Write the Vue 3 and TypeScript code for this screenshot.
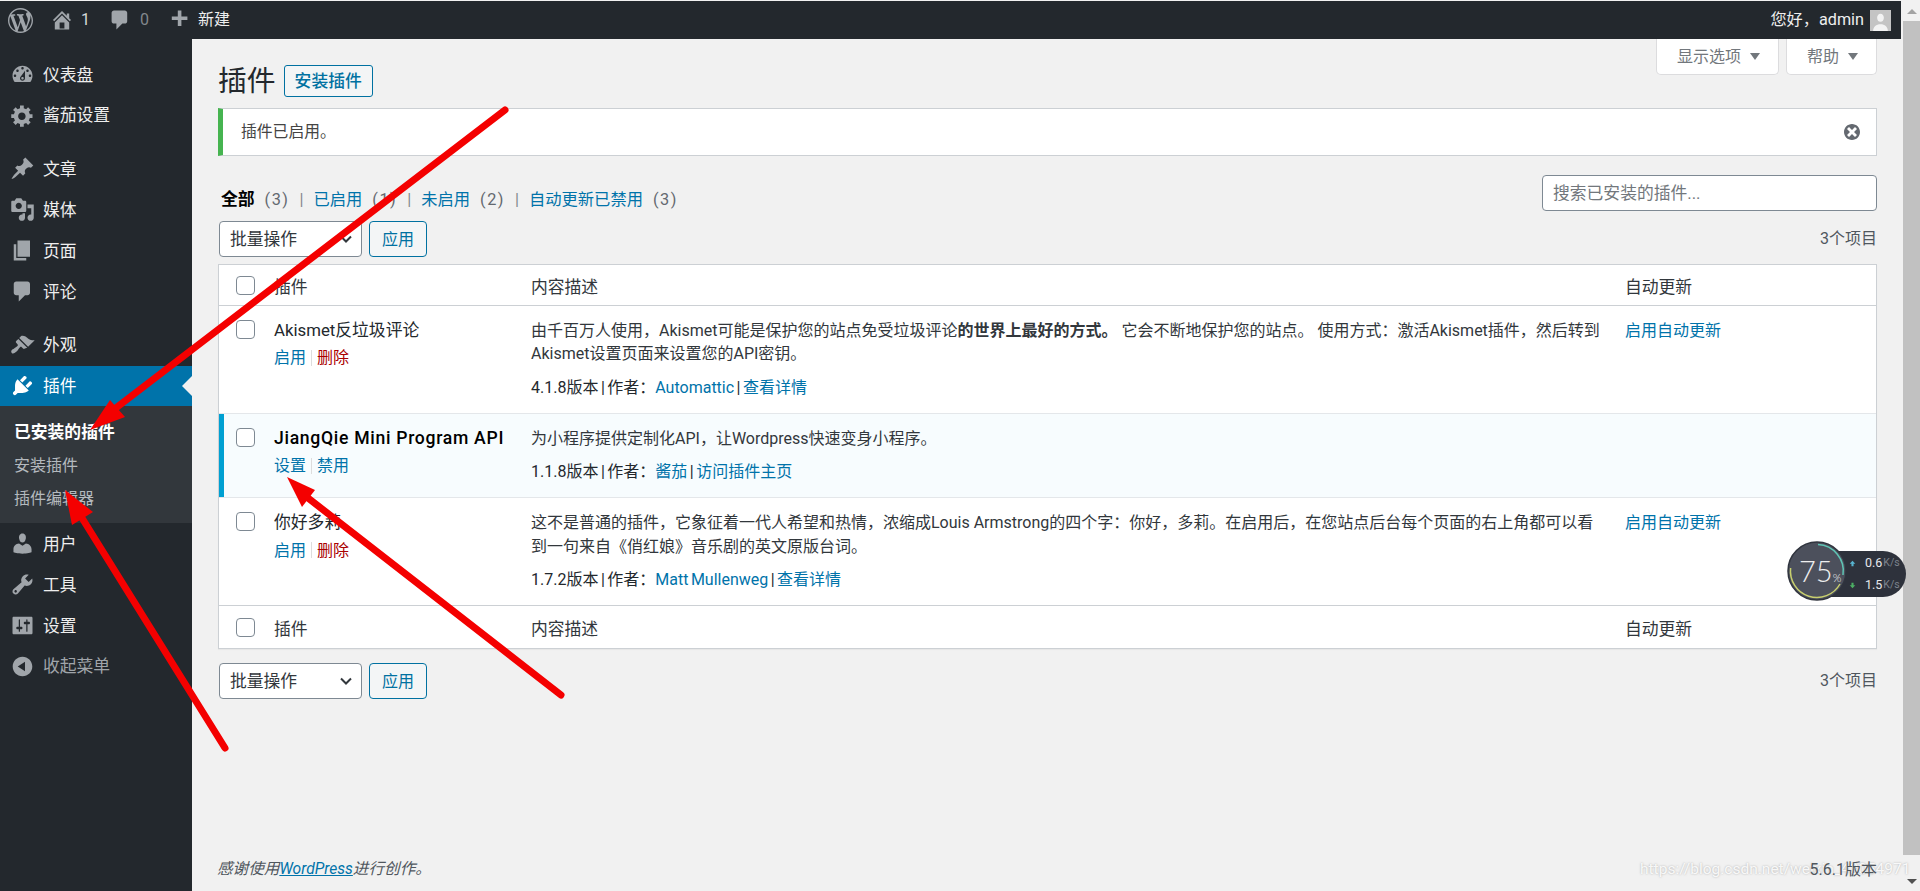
<script setup lang="ts">
interface MenuItem { label: string; icon: string; gapBefore?: boolean; active?: boolean; dim?: boolean; vb?: string }
const P = {
  dashboard: 'M3.76 16h12.48c1.1-1.37 1.76-3.11 1.76-5 0-4.42-3.58-8-8-8s-8 3.58-8 8c0 1.89.66 3.63 1.76 5zM10 4c.55 0 1 .45 1 1s-.45 1-1 1-1-.45-1-1 .45-1 1-1zM6 6c.55 0 1 .45 1 1s-.45 1-1 1-1-.45-1-1 .45-1 1-1zm8 0c.55 0 1 .45 1 1s-.45 1-1 1-1-.45-1-1 .45-1 1-1zm-5.37 5.55L12 7v6c0 1.1-.9 2-2 2s-2-.9-2-2c0-.57.24-1.08.63-1.45zM4 10c.55 0 1 .45 1 1s-.45 1-1 1-1-.45-1-1 .45-1 1-1zm12 0c.55 0 1 .45 1 1s-.45 1-1 1-1-.45-1-1 .45-1 1-1zm-5 3c0-.55-.45-1-1-1s-1 .45-1 1 .45 1 1 1 1-.45 1-1z',
  gear: 'M18 12h-2.18c-.17.7-.44 1.35-.81 1.93l1.54 1.54-2.1 2.1-1.54-1.54c-.58.36-1.23.63-1.91.79V19H8v-2.18c-.68-.16-1.33-.43-1.91-.79l-1.54 1.54-2.12-2.12 1.54-1.54c-.36-.58-.63-1.23-.79-1.91H1V9.03h2.17c.16-.7.44-1.35.8-1.94L2.43 5.55l2.1-2.1 1.54 1.54c.58-.37 1.24-.64 1.93-.81V2h3v2.18c.68.16 1.33.43 1.91.79l1.54-1.54 2.12 2.12-1.54 1.54c.36.59.64 1.24.8 1.94H18V12zm-8.5 1.5c1.66 0 3-1.34 3-3s-1.34-3-3-3-3 1.34-3 3 1.34 3 3 3z',
  pin: 'M10.44 3.02l1.82-1.82 6.36 6.35-1.83 1.82c-1.05-.68-2.48-.57-3.41.36l-.75.75c-.92.93-1.04 2.35-.35 3.41l-1.83 1.82-2.41-2.41-2.8 2.79c-.42.42-3.38 2.71-3.8 2.29s1.86-3.39 2.28-3.81l2.79-2.79L4.1 9.36l1.83-1.82c1.05.69 2.48.57 3.4-.36l.75-.75c.93-.92 1.05-2.35.36-3.41z',
  media: 'M13 11V4c0-.55-.45-1-1-1h-1.67L9 1H5L3.67 3H2c-.55 0-1 .45-1 1v7c0 .55.45 1 1 1h10c.55 0 1-.45 1-1zM7 4.5c1.38 0 2.5 1.12 2.5 2.5S8.38 9.5 7 9.5 4.5 8.38 4.5 7 5.62 4.5 7 4.5zM14 6h5v10.5c0 1.38-1.12 2.5-2.5 2.5S14 17.88 14 16.5s1.12-2.5 2.5-2.5c.17 0 .34.02.5.05V9h-3V6zm-4 8.05V13h2v3.5c0 1.38-1.12 2.5-2.5 2.5S7 17.88 7 16.5 8.12 14 9.5 14c.17 0 .34.02.5.05z',
  page: 'M6 15V2h10v13H6zm-1 1h8v2H3V5h2v11z',
  comment: 'M5 2h9c1.1 0 2 .9 2 2v7c0 1.1-.9 2-2 2h-2l-5 5v-5H5c-1.1 0-2-.9-2-2V4c0-1.1.9-2 2-2z',
  brush: 'M14.48 11.06L7.41 3.99l1.5-1.5c.5-.56 2.3-.47 3.51.32 1.21.8 1.43 1.28 2.91 2.1 1.18.64 2.45 1.26 4.45.85zm-.71.71L6.7 4.7 4.93 6.47c-.39.39-.39 1.02 0 1.41l1.06 1.06c.39.39.39 1.03 0 1.42-.6.6-1.43 1.11-2.21 1.69-.35.26-.7.53-1.01.84C1.43 13.23.4 14.95 1.4 15.95c1 1 2.72-.03 4.07-1.37.31-.31.58-.66.84-1.01.58-.78 1.09-1.61 1.69-2.21.39-.39 1.02-.39 1.41 0l1.06 1.06c.39.39 1.02.39 1.41 0z',
  plugin: 'M13.11 4.36L9.87 7.6 8 5.73l3.24-3.24c.35-.34 1.05-.2 1.56.32.52.51.66 1.21.31 1.55zm-8 1.77l.91-1.12 9.01 9.01-1.19.84c-.71.71-2.63 1.16-3.82 1.16H6.14L4.9 17.26c-.59.59-1.54.59-2.12 0-.59-.58-.59-1.53 0-2.12l1.24-1.24v-3.88c0-1.13.4-3.19 1.09-3.89zm7.26 3.97l3.24-3.24c.34-.35 1.04-.21 1.55.31.52.51.66 1.21.31 1.55l-3.24 3.25z',
  users: 'M10 9.25c-2.27 0-2.73-3.44-2.73-3.44C7 4.02 7.82 2 9.97 2c2.16 0 2.98 2.02 2.71 3.81 0 0-.41 3.44-2.68 3.44zm0 2.57L12.72 10c2.39 0 4.52 2.33 4.52 4.53v2.49s-3.65 1.13-7.24 1.13c-3.65 0-7.24-1.13-7.24-1.13v-2.49c0-2.25 1.94-4.48 4.47-4.48z',
  tools: 'M16.68 9.77c-1.34 1.34-3.3 1.67-4.95.99l-5.41 6.52c-.99.99-2.59.99-3.58 0s-.99-2.59 0-3.57l6.52-5.42c-.68-1.65-.35-3.61.99-4.95 1.28-1.28 3.12-1.62 4.72-1.06l-2.89 2.89 2.82 2.82 2.86-2.87c.53 1.58.18 3.39-1.08 4.65zM3.81 16.21c.4.39 1.04.39 1.43 0 .4-.4.4-1.04 0-1.43-.39-.4-1.03-.4-1.43 0-.39.39-.39 1.03 0 1.43z',
  settings: 'M18 16V4c0-.55-.45-1-1-1H3c-.55 0-1 .45-1 1v12c0 .55.45 1 1 1h14c.55 0 1-.45 1-1zM8 11h1c.55 0 1 .45 1 1s-.45 1-1 1H8v1.5c0 .28-.22.5-.5.5s-.5-.22-.5-.5V13H6c-.55 0-1-.45-1-1s.45-1 1-1h1V5.5c0-.28.22-.5.5-.5s.5.22.5.5V11zm5-2h-1c-.55 0-1-.45-1-1s.45-1 1-1h1V5.5c0-.28.22-.5.5-.5s.5.22.5.5V7h1c.55 0 1 .45 1 1s-.45 1-1 1h-1v5.5c0 .28-.22.5-.5.5s-.5-.22-.5-.5V9z',
  collapse: 'M10 2.16c4.33 0 7.84 3.51 7.84 7.84s-3.51 7.84-7.84 7.84S2.16 14.33 2.16 10 5.71 2.16 10 2.16zm2 11.72V6.12L6.18 9.97z',
  home: 'M16 8.5l1.53 1.53-1.06 1.06L10 4.62l-6.47 6.47-1.06-1.06L10 2.5l4 4v-2h2v4zm-6-2.46l6 5.99V18H4v-5.97zM12 17v-5H8v5h4z',
  plus: 'M17 7v3h-5v5H9v-5H4V7h5V2h3v5h5z',
  dismiss: 'M10 2c4.42 0 8 3.58 8 8s-3.58 8-8 8-8-3.58-8-8 3.58-8 8-8zm5 11l-3-3 3-3-2-2-3 3-3-3-2 2 3 3-3 3 2 2 3-3 3 3z',
  wp: 'M20 10c0-5.51-4.49-10-10-10C4.48 0 0 4.49 0 10c0 5.52 4.48 10 10 10 5.51 0 10-4.48 10-10zM7.78 15.37L4.37 6.22c.55-.02 1.17-.08 1.17-.08.5-.06.44-1.13-.06-1.11 0 0-1.45.11-2.37.11-.18 0-.37 0-.58-.01C4.12 2.69 6.87 1.11 10 1.11c2.33 0 4.45.87 6.05 2.34-.68-.11-1.65.39-1.65 1.58 0 .74.45 1.36.9 2.1.35.61.55 1.36.55 2.46 0 1.49-1.4 5-1.4 5l-3.03-8.37c.54-.02.82-.17.82-.17.5-.05.44-1.25-.06-1.22 0 0-1.44.12-2.38.12-.87 0-2.33-.12-2.33-.12-.5-.03-.56 1.2-.06 1.22l.92.08 1.26 3.41zM17.41 10c.24-.64.74-1.87.43-4.25.7 1.29 1.05 2.71 1.05 4.25 0 3.29-1.73 6.24-4.4 7.78.97-2.59 1.94-5.2 2.92-7.78zM6.1 18.09C3.12 16.65 1.11 13.53 1.11 10c0-1.3.23-2.48.72-3.59C3.25 10.3 4.67 14.2 6.1 18.09zm4.03-6.63l2.58 6.98c-.86.29-1.76.45-2.71.45-.79 0-1.57-.11-2.29-.33.81-2.38 1.62-4.71 2.42-7.1z',
}
const topMenu: MenuItem[] = [
  { label: '仪表盘', icon: P.dashboard },
  { label: '酱茄设置', icon: P.gear },
  { label: '文章', icon: P.pin, gapBefore: true },
  { label: '媒体', icon: P.media },
  { label: '页面', icon: P.page },
  { label: '评论', icon: P.comment },
  { label: '外观', icon: P.brush, gapBefore: true },
  { label: '插件', icon: P.plugin, active: true },
]
const bottomMenu: MenuItem[] = [
  { label: '用户', icon: P.users },
  { label: '工具', icon: P.tools },
  { label: '设置', icon: P.settings },
  { label: '收起菜单', icon: P.collapse, dim: true },
]
const subMenu = ['已安装的插件', '安装插件', '插件编辑器']
const filters = [
  { label: '全部', count: 3, current: true },
  { label: '已启用', count: 1 },
  { label: '未启用', count: 2 },
  { label: '自动更新已禁用', count: 3 },
]
const arrows = [
  { x1: 505, y1: 110, x2: 108, y2: 414, head: '90,430 110,400 125,417' },
  { x1: 225, y1: 748, x2: 82, y2: 518, head: '65,490 93,512 72,525' },
  { x1: 561, y1: 695, x2: 308, y2: 498, head: '287,477 315,490 302,507' },
]
</script>

<template>
  <div class="page">
    <div class="wp">
      <header class="adminbar">
        <svg class="wplogo" viewBox="0 0 20 20"><path :d="P.wp" /></svg>
        <span class="ab-item"><svg viewBox="0 0 20 20"><path :d="P.home" /></svg><span>1</span></span>
        <span class="ab-item zero"><svg viewBox="0 0 20 20"><path :d="P.comment" /></svg><span>0</span></span>
        <span class="ab-item new"><svg viewBox="0 0 20 20"><path :d="P.plus" /></svg><span>新建</span></span>
        <span class="howdy">您好，admin</span>
        <span class="avatar">
          <svg viewBox="0 0 20 20"><rect width="20" height="20" fill="#c4c4c4" /><path fill="#f3f3f3" d="M10 3.5c2 0 3.2 1.6 3.2 3.8 0 2-1.2 4-3.2 4s-3.2-2-3.2-4c0-2.2 1.2-3.8 3.2-3.8zM3 20c0-4 3-6.5 7-6.5s7 2.5 7 6.5z" /></svg>
        </span>
      </header>
      <div class="below">
        <nav class="sidebar">
          <template v-for="m in topMenu" :key="m.label">
            <a class="mi" :class="{ gap: m.gapBefore, active: m.active }">
              <svg viewBox="0 0 20 20"><path :d="m.icon" /></svg>
              <span>{{ m.label }}</span>
            </a>
          </template>
          <div class="submenu">
            <a v-for="(s, i) in subMenu" :key="s" :class="{ cur: i === 0 }">{{ s }}</a>
          </div>
          <a v-for="m in bottomMenu" :key="m.label" class="mi" :class="{ dim: m.dim }">
            <svg viewBox="0 0 20 20"><path :d="m.icon" /></svg>
            <span>{{ m.label }}</span>
          </a>
        </nav>
        <main class="main">
          <div class="tabs">
            <span class="tab">显示选项<i class="caret"></i></span>
            <span class="tab help">帮助<i class="caret"></i></span>
          </div>
          <div class="heading">
            <h1>插件</h1>
            <a class="addnew">安装插件</a>
          </div>
          <div class="notice">
            <p>插件已启用。</p>
            <svg viewBox="0 0 20 20"><path :d="P.dismiss" /></svg>
          </div>
          <div class="filterline">
            <ul class="filters">
              <li v-for="(f, i) in filters" :key="f.label">
                <span v-if="i > 0" class="sep">|</span>
                <a :class="{ current: f.current }">{{ f.label }}</a>
                <span class="count">({{ f.count }})</span>
              </li>
            </ul>
            <div class="search">搜索已安装的插件...</div>
          </div>
          <div class="tablenav top">
            <div class="select">批量操作<svg viewBox="0 0 16 16"><path d="M3 5.5l5 5 5-5" /></svg></div>
            <div class="apply">应用</div>
            <span class="num">3个项目</span>
          </div>
          <div class="table">
            <div class="tr head">
              <div class="cb"><i class="box"></i></div>
              <div>插件</div>
              <div>内容描述</div>
              <div>自动更新</div>
            </div>
            <div class="tr row">
              <div class="cb"><i class="box"></i></div>
              <div>
                <div class="name">Akismet反垃圾评论</div>
                <div class="acts"><a>启用</a><i></i><a class="del">删除</a></div>
              </div>
              <div class="desc">
                <p>由千百万人使用，Akismet可能是保护您的站点免受垃圾评论<b>的世界上最好的方式。</b> 它会不断地保护您的站点。 使用方式：激活Akismet插件，然后转到Akismet设置页面来设置您的API密钥。</p>
                <p class="meta">4.1.8版本 | 作者：<a>Automattic</a> | <a>查看详情</a></p>
              </div>
              <div class="auto"><a>启用自动更新</a></div>
            </div>
            <div class="tr row on">
              <div class="cb"><i class="box"></i></div>
              <div>
                <div class="name strong">JiangQie Mini Program API</div>
                <div class="acts"><a>设置</a><i></i><a>禁用</a></div>
              </div>
              <div class="desc">
                <p>为小程序提供定制化API，让Wordpress快速变身小程序。</p>
                <p class="meta">1.1.8版本 | 作者：<a>酱茄</a> | <a>访问插件主页</a></p>
              </div>
              <div class="auto"></div>
            </div>
            <div class="tr row">
              <div class="cb"><i class="box"></i></div>
              <div>
                <div class="name">你好多莉</div>
                <div class="acts"><a>启用</a><i></i><a class="del">删除</a></div>
              </div>
              <div class="desc">
                <p>这不是普通的插件，它象征着一代人希望和热情，浓缩成Louis Armstrong的四个字：你好，多莉。在启用后，在您站点后台每个页面的右上角都可以看到一句来自《俏红娘》音乐剧的英文原版台词。</p>
                <p class="meta">1.7.2版本 | 作者：<a>Matt Mullenweg</a> | <a>查看详情</a></p>
              </div>
              <div class="auto"><a>启用自动更新</a></div>
            </div>
            <div class="tr head foot">
              <div class="cb"><i class="box"></i></div>
              <div>插件</div>
              <div>内容描述</div>
              <div>自动更新</div>
            </div>
          </div>
          <div class="tablenav bottom">
            <div class="select">批量操作<svg viewBox="0 0 16 16"><path d="M3 5.5l5 5 5-5" /></svg></div>
            <div class="apply">应用</div>
            <span class="num">3个项目</span>
          </div>
          <footer class="footer">
            <span class="thanks">感谢使用<a>WordPress</a>进行创作。</span>
            <span class="version">5.6.1版本</span>
          </footer>
        </main>
      </div>
    </div>
    <div class="scrollbar">
      <i class="sb-up"></i>
      <div class="thumb"></div>
      <i class="sb-down"></i>
    </div>

    <div class="watermark">https://blog.csdn.net/weixin_43054971</div>

    <div class="speed">
      <div class="pill">
        <div class="sp"><svg viewBox="0 0 10 10"><path fill="#58b4d0" d="M5 1l4 4.2H6.5V9h-3V5.2H1z" /></svg><b>0.6</b><small>K/s</small></div>
        <div class="sp"><svg viewBox="0 0 10 10"><path fill="#4caf64" d="M5 9L1 4.8h2.5V1h3v3.8H9z" /></svg><b>1.5</b><small>K/s</small></div>
      </div>
      <div class="gauge">
        <svg viewBox="0 0 60 60">
          <circle cx="30" cy="30" r="29" fill="#4c505c" stroke="#30343e" stroke-width="1.5" />
          <path d="M31 3.5A26.5 26.5 0 0 1 56 34" fill="none" stroke="#5fc4b4" stroke-width="1.5" />
          <path d="M53 43A26.5 26.5 0 0 1 3.6 27" fill="none" stroke="#c8cf6e" stroke-width="1.5" />
        </svg>
        <span class="pct">75<small>%</small></span>
      </div>
    </div>

    <svg class="arrows" viewBox="0 0 1920 891">
      <g v-for="(a, i) in arrows" :key="i">
        <line :x1="a.x1" :y1="a.y1" :x2="a.x2" :y2="a.y2" stroke="#f40000" stroke-width="7" stroke-linecap="round" />
        <polygon :points="a.head" fill="#f40000" />
      </g>
    </svg>
  </div>
</template>

<style>
html, body { margin: 0; padding: 0; overflow: hidden; background: #f1f1f1; }
</style>

<style scoped>
.page {
  position: relative;
  display: flex;
  width: 1920px;
  height: 891px;
  overflow: hidden;
  background: #f1f1f1;
  font-family: Roboto, "Noto Sans CJK SC", sans-serif;
  font-size: 16px;
  line-height: 23.4px;
  color: #444;
}
.wp { flex: 1; display: flex; flex-direction: column; min-width: 0; }
.adminbar {
  height: 38px;
  margin-top: 1px;
  margin-right: 2px;
  background: #23282d;
  color: #eee;
  display: flex;
  align-items: center;
  padding: 0 8px;
  flex: none;
  font-size: 16px;
}
.wplogo { width: 25px; height: 25px; fill: #a0a5aa; margin-right: 17px; }
.ab-item { display: flex; align-items: center; color: #d5d7d9; }
.ab-item svg { width: 24px; height: 24px; fill: #a0a5aa; margin-right: 7px; }
.ab-item.zero { margin-left: 18px; color: #82878c; }
.ab-item.zero svg { margin-right: 8px; }
.ab-item.new { margin-left: 18px; color: #eee; }
.ab-item.new svg { margin-right: 7px; }
.howdy { margin-left: auto; margin-right: 6px; font-size: 16.2px; }
.avatar { width: 21px; height: 21px; margin-right: 2px; }
.avatar svg { display: block; width: 21px; height: 21px; }

.below { flex: 1; display: flex; min-height: 0; }
.sidebar {
  width: 192px;
  flex: none;
  background: #23282d;
  padding-top: 15px;
  box-sizing: border-box;
}
.mi {
  position: relative;
  display: flex;
  align-items: center;
  height: 40.8px;
  font-size: 16.8px;
  color: #eee;
  padding-left: 10px;
}
.mi span { padding-top: 2px; }
.mi svg { width: 25px; height: 25px; fill: #a0a5aa; margin-right: 8px; flex: none; }
.mi.gap { margin-top: 13px; }
.mi.dim { color: #a0a5aa; }
.mi.active { background: #0073aa; color: #fff; }
.mi.active svg { fill: #fff; }
.mi.active::after {
  content: "";
  position: absolute;
  right: 0;
  top: 50%;
  margin-top: -10px;
  border: 10px solid transparent;
  border-right-color: #f1f1f1;
  border-left-width: 0;
}
.submenu {
  background: #32373c;
  height: 117px;
  padding-top: 10px;
  box-sizing: border-box;
  display: flex;
  flex-direction: column;
}
.submenu a {
  height: 33px;
  line-height: 33px;
  padding-left: 14px;
  color: #b4b9be;
  font-size: 16px;
}
.submenu a.cur { color: #fff; font-weight: 700; font-size: 16.8px; }

.main { flex: 1; min-width: 0; display: flex; flex-direction: column; padding: 0 26px 0 26px; position: relative; }
.tabs { position: absolute; top: 0; right: 26px; display: flex; gap: 7px; }
.tab {
  height: 35px;
  line-height: 35px;
  padding: 0 18px 0 20px;
  background: #fff;
  border: 1px solid #dcdcde;
  border-top: 0;
  border-radius: 0 0 5px 5px;
  color: #72777c;
  display: flex;
  align-items: center;
}
.caret {
  display: block;
  margin-left: 9px;
  width: 0;
  height: 0;
  border: 5px solid transparent;
  border-top: 7px solid #72777c;
  border-bottom: 0;
}
.heading { display: flex; align-items: center; height: 69px; padding-top: 15px; box-sizing: border-box; gap: 8px; flex: none; }
h1 { margin: 0; font-size: 28.8px; font-weight: 400; line-height: 36px; color: #23282d; }
.addnew {
  height: 30px;
  line-height: 30px;
  padding: 0 10px;
  border: 1px solid #0071a1;
  border-radius: 3px;
  color: #0071a1;
  font-size: 16.8px;
  font-weight: 500;
  background: #f3f5f6;
}
.notice {
  height: 48px;
  box-sizing: border-box;
  background: #fff;
  border: 1px solid #ccd0d4;
  border-left: 5px solid #46b450;
  display: flex;
  align-items: center;
  justify-content: space-between;
  padding: 0 14px 0 18px;
  flex: none;
}
.notice p { margin: 0; font-size: 15.8px; }
.notice svg { width: 20px; height: 20px; fill: #646970; }
.filterline { display: flex; align-items: flex-start; justify-content: space-between; margin-top: 19px; height: 46px; flex: none; }
.filters { list-style: none; display: flex; margin: 13px 0 0 3px; padding: 0; font-size: 16.3px; }
.filters li { display: flex; align-items: center; }
.filters a { color: #0073aa; }
.filters a.current { color: #000; font-weight: 700; font-size: 16.8px; }
.count { color: #646970; margin: 0 10px 0 10px; letter-spacing: 1.5px; }
.sep { color: #82878c; margin-right: 10px; }
.search {
  width: 335px;
  height: 36px;
  line-height: 34px;
  box-sizing: border-box;
  border: 1px solid #7e8993;
  border-radius: 4px;
  background: #fff;
  color: #72777c;
  font-size: 16.8px;
  padding-left: 10px;
}
.tablenav { display: flex; align-items: center; height: 36px; flex: none; }
.tablenav.top { margin-bottom: 7px; }
.tablenav.bottom { margin-top: 14px; }
.select {
  width: 143px;
  height: 36px;
  box-sizing: border-box;
  margin-left: 1px;
  border: 1px solid #7e8993;
  border-radius: 4px;
  background: #fff;
  color: #32373c;
  font-size: 16.8px;
  line-height: 35px;
  padding-left: 10px;
  position: relative;
}
.select svg { position: absolute; right: 7px; top: 9px; width: 16px; height: 16px; fill: none; stroke: #32373c; stroke-width: 2; }
.apply {
  margin-left: 7px;
  width: 58px;
  height: 36px;
  line-height: 35px;
  box-sizing: border-box;
  text-align: center;
  border: 1px solid #0071a1;
  border-radius: 4px;
  color: #0071a1;
  background: #f3f5f6;
}
.num { margin-left: auto; color: #50575e; }
.table { background: #fff; border: 1px solid #ccd0d4; flex: none; box-shadow: 0 1px 1px rgba(0,0,0,.04); }
.tr {
  display: grid;
  grid-template-columns: 55px 257px 1094px 1fr;
}
.head { height: 40px; align-items: center; border-bottom: 1px solid #ccd0d4; color: #32373c; font-size: 16.8px; }
.head > div:not(.cb) { padding-top: 5px; }
.head.foot { border-bottom: 0; border-top: 1px solid #ccd0d4; height: 42px; }
.head .cb { display: flex; align-items: center; }
.box {
  display: block;
  width: 19px;
  height: 19px;
  box-sizing: border-box;
  margin-left: 17px;
  background: #fff;
  border: 1px solid #7e8993;
  border-radius: 4px;
}
.row { padding: 13px 0 13.6px; border-bottom: 1px solid #e4e7ea; }
.row + .foot { margin-top: -1px; }
.row.on { background: #f7fcfe; box-shadow: inset 5px 0 0 #00a0d2; }
.row .cb { padding-top: 1px; }
.name { font-size: 16.8px; color: #23282d; }
.name.strong { font-weight: 500; color: #000; font-size: 17.6px; letter-spacing: .7px; white-space: nowrap; }
.acts { display: flex; align-items: center; margin-top: 4px; }
.acts a { color: #0073aa; }
.acts a.del { color: #a00; }
.acts i { display: block; width: 1px; height: 16px; background: #ddd; margin: 0 5px; }
.desc { padding-right: 19px; color: #32373c; }
.desc p { margin: 0; }
.desc .meta { margin-top: 10px; color: #23282d; word-spacing: -1.5px; }
.desc a, .auto a { color: #0073aa; }
.footer {
  margin-top: auto;
  height: 33px;
  display: flex;
  justify-content: space-between;
  color: #50575e;
  flex: none;
}
.thanks { font-style: italic; margin-left: -1px; font-size: 15.6px; }
.thanks a { color: #0073aa; text-decoration: underline; }
.version { position: relative; z-index: 2; }
.scrollbar {
  width: 17px;
  flex: none;
  display: flex;
  flex-direction: column;
  align-items: center;
  background: #f1f1f1;
}
.sb-up, .sb-down { display: block; width: 0; height: 0; border: 5px solid transparent; flex: none; }
.sb-up { border-bottom: 5px solid #a3a3a3; border-top: 0; margin: 9px 0 7px; }
.thumb { width: 17px; height: 834px; background: #c1c1c1; flex: none; }
.sb-down { border-top: 5px solid #505050; border-bottom: 0; margin-top: 24px; }

.speed { position: absolute; left: 1787px; top: 541px; width: 119px; height: 60px; }
.pill {
  position: absolute;
  left: 32px;
  top: 10px;
  width: 87px;
  height: 46px;
  box-sizing: border-box;
  padding: 1px 0 0 30px;
  border-radius: 0 23px 23px 0;
  background: #2e323c;
  color: #e6e8ec;
  line-height: 22px;
}
.sp { display: flex; align-items: center; }
.sp svg { width: 7px; height: 7px; margin-right: 9px; }
.sp b { font-weight: 400; font-size: 12.5px; }
.sp small { font-size: 10.5px; color: #7d828c; margin-left: 1px; }
.gauge { position: absolute; left: 0; top: 0; width: 60px; height: 60px; }
.gauge svg { display: block; width: 60px; height: 60px; }
.pct { position: absolute; left: 12px; top: 14px; font-size: 29px; line-height: 32px; font-weight: 300; color: #eee; font-family: Lato, sans-serif; white-space: nowrap; }
.pct small { font-size: 11px; }
.arrows { position: absolute; inset: 0; width: 1920px; height: 891px; pointer-events: none; z-index: 3; }
.watermark {
  position: absolute;
  left: 1640px;
  top: 858px;
  font-size: 15.5px;
  line-height: 22px;
  color: rgba(255,255,255,.9);
  text-shadow: 0 0 2px rgba(140,140,140,.7);
  white-space: nowrap;
  z-index: 1;
}
</style>
